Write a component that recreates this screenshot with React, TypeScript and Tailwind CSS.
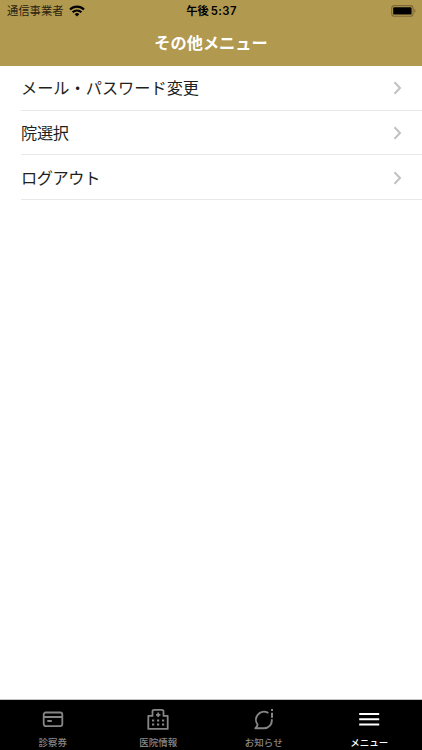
import type { ReactNode } from "react";
import clsx from "clsx";

const menuItems = [
  { label: "メール・パスワード変更" },
  { label: "院選択", className: "tracking-[-0.3px]" },
  { label: "ログアウト", className: "tracking-[-0.4px]" },
];

function WifiIcon() {
  return (
    <svg width="16" height="12" viewBox="0 0 16 12" fill="none" stroke="#000" strokeWidth="2.1">
      <path d="M1 4.5a10 10 0 0 1 14 0" />
      <path d="M3.6 7.3a6.2 6.2 0 0 1 8.8 0" />
      <path d="M5.7 9.2a3.3 3.3 0 0 1 4.6 0L8 11.6z" fill="#000" stroke="none" />
    </svg>
  );
}

function BatteryIcon() {
  return (
    <svg width="25" height="12" viewBox="0 0 25 12">
      <rect x="0.7" y="0.6" width="21.4" height="10.6" rx="2.8" fill="none" stroke="#7d6a36" strokeWidth="1.1" />
      <rect x="2.2" y="2.2" width="18.4" height="7.4" rx="1.2" fill="#000" />
      <path d="M23.3 4.1v3.600c.8-.3 1.200-1 1.200-1.800s-.4-1.500-1.200-1.800z" fill="#7d6a36" />
    </svg>
  );
}

function ChevronIcon() {
  return (
    <svg width="9" height="14" viewBox="0 0 9 14" fill="none" stroke="#c1c1c3" strokeWidth="2">
      <path d="M1.5 1.3 7 7l-5.5 5.7" />
    </svg>
  );
}

function CardIcon() {
  return (
    <svg width="24" height="24" viewBox="0 0 24 24" fill="none" stroke="currentColor" strokeWidth="1.8">
      <rect x="2.7" y="5.5" width="18.6" height="13.600" rx="2" />
      <path d="M2.7 10h18.6M6.300 14h4.500" />
    </svg>
  );
}

function HospitalIcon() {
  return (
    <svg width="24" height="24" viewBox="0 0 24 24" fill="none" stroke="currentColor" strokeWidth="1.8">
      <path d="M2.3 21.9V8.900h4.200V4.500q0-1.700 1.700-1.700h7.600q1.700 0 1.700 1.700v4.400h4.200v13z" strokeLinejoin="round" />
      <path d="M12.200 5.600v4.400M10 7.800h4.400" />
      <path d="M6 13.500h2.200M11 13.500h2.200M16 13.500h2.200M6 17.500h2.200M11 17.500h2.200M16 17.500h2.200" />
    </svg>
  );
}

function NoticeIcon() {
  return (
    <svg width="24" height="24" viewBox="0 0 24 24" fill="none" stroke="currentColor" strokeWidth="1.9">
      <path
        d="M15.700 5.600A8.100 8.100 0 0 0 5.600 17.700Q5.300 19.700 3.400 21.300H12a8 8 0 0 0 7.900-8.300"
        strokeLinecap="round"
        strokeLinejoin="round"
      />
      <path d="M20 2v2.100M20 5.700v5.100" strokeWidth="2" />
    </svg>
  );
}

function MenuIcon() {
  return (
    <svg width="24" height="24" viewBox="0 0 24 24" fill="none" stroke="currentColor" strokeWidth="2">
      <path d="M2.200 7h20M2.200 12.200h20M2.200 17.400h20" />
    </svg>
  );
}

const tabs: { label: string; icon: ReactNode; active?: boolean }[] = [
  { label: "診察券", icon: <CardIcon /> },
  { label: "医院情報", icon: <HospitalIcon /> },
  { label: "お知らせ", icon: <NoticeIcon /> },
  { label: "メニュー", icon: <MenuIcon />, active: true },
];

export default function App() {
  return (
    <div className="flex h-[750px] w-[422px] flex-col overflow-hidden bg-white font-['Inter','Noto_Sans_CJK_JP',sans-serif]">
      <header className="h-[66px] shrink-0 bg-[#b29950]">
        <div className="grid h-[22px] grid-cols-[1fr_auto_1fr] items-center pr-[6px] pl-[7px] text-[11.3px] leading-[22px] text-black">
          <div className="flex items-center gap-[5px]">
            <span className="text-[#2b2410]">通信事業者</span>
            <WifiIcon />
          </div>
          <div className="flex gap-[2px] font-semibold">
            <span>午後</span>
            <span className="tracking-[0.4px]">5:37</span>
          </div>
          <div className="flex justify-end">
            <BatteryIcon />
          </div>
        </div>
        <h1 className="text-center text-[16.2px] leading-[42px] font-bold text-white">その他メニュー</h1>
      </header>

      <ul className="flex-1 pl-[21px]">
        {menuItems.map((item) => (
          <li
            key={item.label}
            className="flex h-[44.7px] items-center justify-between border-b border-[#e8e8e8] pt-px pr-[20.5px] text-[16.2px] text-[#231f1c]"
          >
            <span className={item.className}>{item.label}</span>
            <ChevronIcon />
          </li>
        ))}
      </ul>

      <nav className="grid h-[51px] shrink-0 grid-cols-4 border-t border-[#c4c4c4] bg-black">
        {tabs.map((tab) => (
          <div
            key={tab.label}
            className={clsx(
              "flex flex-col items-center pt-[7px]",
              tab.active ? "text-white" : "text-[#868686]"
            )}
          >
            {tab.icon}
            <span className="text-[9.5px] leading-[23px] font-medium">{tab.label}</span>
          </div>
        ))}
      </nav>
    </div>
  );
}
